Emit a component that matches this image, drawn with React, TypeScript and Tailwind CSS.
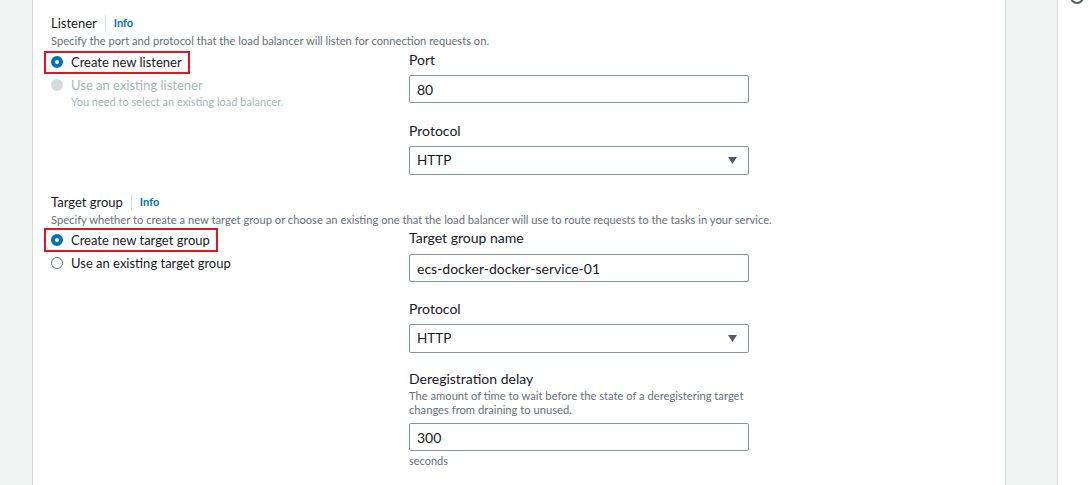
import React from "react";

const font = { fontFamily: "Lato, 'Liberation Sans', sans-serif" };

function RadioOn() {
  return <span className="inline-block w-[12px] h-[12px] rounded-full bg-[#0073bb] border-[4px] border-[#0073bb] box-border flex-none"><span className="block w-full h-full rounded-full bg-white" /></span>;
}
function RadioOff() {
  return <span className="inline-block w-[12px] h-[12px] rounded-full border-[1.5px] border-[#687078] box-border flex-none" />;
}
function RadioDisabled() {
  return <span className="inline-block w-[12px] h-[12px] rounded-full bg-[#d5dbdb] flex-none" />;
}

function Title({ text }: { text: string }) {
  return (
    <div className="flex items-center h-[20px]">
      <span className="text-[13px] leading-[20px] text-[#16191f]">{text}</span>
      <span className="mx-[8px] w-px h-[16px] bg-[#d5dbdb]" />
      <span className="text-[11px] font-bold text-[#0073bb] leading-[20px]">Info</span>
    </div>
  );
}

function Label({ text }: { text: string }) {
  return <div className="text-[14px] leading-[20px] text-[#16191f]">{text}</div>;
}

function Input({ value }: { value: string }) {
  return (
    <div className="w-[340px] h-[28px] border border-[#879596] rounded-[2px] px-[7px] flex items-center text-[14px] text-[#16191f]">
      {value}
    </div>
  );
}

function Select({ value }: { value: string }) {
  return (
    <div className="w-[340px] h-[29px] border border-[#879596] rounded-[2px] pl-[7px] pr-[11px] flex items-center justify-between text-[13.5px] text-[#16191f]">
      <span>{value}</span>
      <svg width="9" height="7" viewBox="0 0 9 7"><path d="M0 0 H9 L4.5 7 Z" fill="#545b64" /></svg>
    </div>
  );
}

export default function App() {
  return (
    <div className="flex w-[1090px] h-[485px] overflow-hidden bg-white" style={font}>
      <div className="w-[33px] bg-[#f2f3f3] border-r border-[#d5dbdb]" />
      <div className="w-[973px] bg-white border-r border-[#d5dbdb] pl-[18px]">
        {/* Listener */}
        <div className="pt-[13px]">
          <Title text="Listener" />
          <div className="text-[11.2px] leading-[16px] text-[#687078]">Specify the port and protocol that the load balancer will listen for connection requests on.</div>
          <div className="flex mt-[1px]">
            <div className="w-[358px]">
              <div className="inline-flex items-center gap-[8px] -ml-[7px] pl-[5px] pr-[6px] border-2 border-[#e3141b] h-[23px]">
                <RadioOn />
                <span className="text-[13px] leading-[20px] text-[#16191f]">Create new listener</span>
              </div>
              <div className="flex items-center gap-[8px] mt-[1px]">
                <RadioDisabled />
                <span className="text-[13px] leading-[20px] text-[#aab7b8]">Use an existing listener</span>
              </div>
              <div className="pl-[20px] text-[11px] leading-[14px] text-[#aab7b8]">You need to select an existing load balancer.</div>
            </div>
            <div>
              <Label text="Port" />
              <div className="mt-[5px]"><Input value="80" /></div>
              <div className="mt-[18px]"><Label text="Protocol" /></div>
              <div className="mt-[5px]"><Select value="HTTP" /></div>
            </div>
          </div>
        </div>
        {/* Target group */}
        <div className="pt-[17px]">
          <Title text="Target group" />
          <div className="text-[11.2px] leading-[16px] text-[#687078]">Specify whether to create a new target group or choose an existing one that the load balancer will use to route requests to the tasks in your service.</div>
          <div className="flex">
            <div className="w-[358px]">
              <div className="inline-flex items-center gap-[8px] -ml-[7px] pl-[5px] pr-[6px] border-2 border-[#e3141b] h-[24px]">
                <RadioOn />
                <span className="text-[13px] leading-[20px] text-[#16191f]">Create new target group</span>
              </div>
              <div className="flex items-center gap-[8px] mt-[1px]">
                <RadioOff />
                <span className="text-[13px] leading-[20px] text-[#16191f]">Use an existing target group</span>
              </div>
            </div>
            <div>
              <Label text="Target group name" />
              <div className="mt-[6px]"><Input value="ecs-docker-docker-service-01" /></div>
              <div className="mt-[17px]"><Label text="Protocol" /></div>
              <div className="mt-[5px]"><Select value="HTTP" /></div>
              <div className="mt-[16px]"><Label text="Deregistration delay" /></div>
              <div className="w-[345px] text-[11.2px] leading-[14px] text-[#687078]">The amount of time to wait before the state of a deregistering target changes from draining to unused.</div>
              <div className="mt-[6px]"><Input value="300" /></div>
              <div className="mt-[2px] text-[11px] leading-[16px] text-[#687078]">seconds</div>
              <div className="mt-[12px]"><Label text="Health check protocol" /></div>
            </div>
          </div>
        </div>
      </div>
      <div className="w-[52px] bg-[#f2f3f3] border-r border-[#d5dbdb]" />
      <div className="flex-1 bg-white pl-[12px]">
        <svg width="16" height="16" viewBox="0 0 16 16" className="-mt-[11px]"><circle cx="7" cy="8" r="6" fill="none" stroke="#545b64" strokeWidth="2" /></svg>
      </div>
    </div>
  );
}
